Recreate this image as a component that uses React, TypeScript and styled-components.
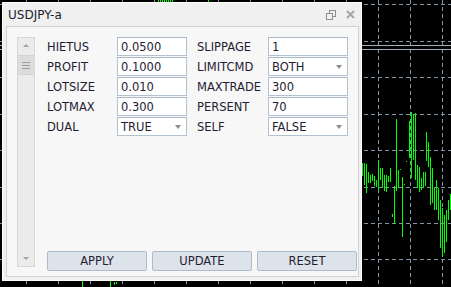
import React from 'react';
import styled, { createGlobalStyle } from 'styled-components';

const GlobalStyle = createGlobalStyle`
  html, body {
    margin: 0;
    padding: 0;
    background: #000;
  }
  body {
    font-family: "DejaVu Sans", Verdana, sans-serif;
  }
`;

const Desktop = styled.div`
  position: relative;
  width: 451px;
  height: 287px;
  overflow: hidden;
  background: #000;
`;

const ChartSvg = styled.svg`
  display: block;
`;

const Window = styled.div`
  position: absolute;
  left: 2px;
  top: 2px;
  width: 360px;
  height: 279px;
  box-sizing: border-box;
  border: 1px solid #ffffff;
  background: #f0f0f0;
  padding: 0 2px 3px 3px;
  display: flex;
  flex-direction: column;
`;

const TitleBar = styled.div`
  height: 23px;
  display: flex;
  align-items: center;
  padding: 0 4px 0 2px;
  gap: 10px;
`;

const Title = styled.div`
  flex: 1;
  font-size: 12px;
  color: #1d1b2e;
  margin-top: 1px;
`;

const TitleIcon = styled.svg`
  display: block;
`;

const Panel = styled.div`
  flex: 1;
  display: flex;
  border: 1px solid #d2d2d2;
  background: #f7f7f7;
`;

const ScrollBar = styled.div`
  width: 18px;
  box-sizing: border-box;
  margin: 10px 0 9px 10px;
  border: 1px solid #d8d8d8;
  background: #ebebeb;
  display: flex;
  flex-direction: column;
  align-items: center;
`;

const Arrow = styled.div<{ $up?: boolean }>`
  width: 0;
  height: 0;
  border-left: 3.5px solid transparent;
  border-right: 3.5px solid transparent;
  ${({ $up }) =>
    $up
      ? 'border-bottom: 3px solid #a2a2a2; margin-top: 6px;'
      : 'border-top: 3px solid #a2a2a2; margin-top: auto; margin-bottom: 6px;'}
`;

const Thumb = styled.div`
  width: 16px;
  height: 20px;
  box-sizing: border-box;
  margin-top: 8px;
  background: #dcdcdc;
  border-top: 1px solid #d2d2d2;
  border-bottom: 1px solid #d2d2d2;
  display: flex;
  flex-direction: column;
  align-items: center;
  justify-content: center;
  gap: 2px;
`;

const Grip = styled.div`
  width: 8px;
  height: 1px;
  background: #9c9c9c;
`;

const Main = styled.div`
  flex: 1;
  display: flex;
  flex-direction: column;
  justify-content: space-between;
  margin-left: 12px;
  padding: 10px 0 5px;
`;

const Fields = styled.div`
  display: flex;
  gap: 10px;
`;

const FieldGroup = styled.div<{ $labelWidth: number; $inputWidth: number }>`
  display: grid;
  grid-template-columns: ${({ $labelWidth, $inputWidth }) => `${$labelWidth}px ${$inputWidth}px`};
  grid-auto-rows: 19px;
  row-gap: 1px;
`;

const Label = styled.div`
  display: flex;
  align-items: center;
  font-size: 11.5px;
  color: #1f1c33;
  white-space: nowrap;
`;

const Box = styled.div`
  box-sizing: border-box;
  height: 19px;
  display: flex;
  align-items: center;
  padding: 0 5px 0 3px;
  border: 1px solid #b3c1d0;
  border-top-color: #a9b8c8;
  background: #ffffff;
  font-size: 11.5px;
  color: #1f1c33;
`;

const BoxText = styled.span`
  flex: 1;
`;

const DropArrow = styled.span`
  width: 0;
  height: 0;
  border-left: 3.5px solid transparent;
  border-right: 3.5px solid transparent;
  border-top: 4px solid #8e8e8e;
`;

const Buttons = styled.div`
  display: flex;
  gap: 5px;
`;

const Button = styled.button`
  width: 100px;
  height: 20px;
  box-sizing: border-box;
  padding: 0;
  border: 1px solid #adbccc;
  border-radius: 2px;
  background: #dde3eb;
  font-family: "DejaVu Sans", Verdana, sans-serif;
  font-size: 11.5px;
  color: #1f1c33;
`;

type Field = { label: string; value: string; select?: boolean };

const left: Field[] = [
  { label: 'HIETUS', value: '0.0500' },
  { label: 'PROFIT', value: '0.1000' },
  { label: 'LOTSIZE', value: '0.010' },
  { label: 'LOTMAX', value: '0.300' },
  { label: 'DUAL', value: 'TRUE', select: true },
];

const right: Field[] = [
  { label: 'SLIPPAGE', value: '1' },
  { label: 'LIMITCMD', value: 'BOTH', select: true },
  { label: 'MAXTRADE', value: '300' },
  { label: 'PERSENT', value: '70' },
  { label: 'SELF', value: 'FALSE', select: true },
];

// x, top, bottom of each green bar on the chart
const bars: [number, number, number][] = [
  [158, 0, 2], [160, 0, 2], [162, 0, 2], [164, 0, 2], [166, 0, 2], [168, 0, 2], [170, 0, 2], [172, 0, 2], [208, 0, 2],
  [82, 281, 287], [110, 281, 287], [114, 282, 285], [116, 282, 284],
  [362, 163, 176], [364, 163, 185], [366, 164, 193], [368, 172, 183], [370, 175, 183], [372, 174, 181],
  [374, 176, 186], [376, 180, 187], [378, 160, 190], [380, 168, 180], [382, 168, 188], [384, 175, 191],
  [386, 175, 192], [388, 176, 182], [390, 168, 182], [392, 214, 217], [394, 186, 224], [396, 119, 191],
  [398, 170, 188], [400, 169, 170], [402, 177, 237], [404, 184, 185], [406, 161, 162], [409, 121, 158],
  [411, 112, 178], [413, 114, 160], [415, 113, 180], [417, 165, 188], [419, 167, 192], [421, 178, 190],
  [423, 172, 188], [425, 172, 186], [426, 132, 161], [428, 142, 167], [430, 157, 205], [432, 168, 203],
  [434, 188, 210], [436, 180, 210], [438, 188, 220], [440, 200, 248], [442, 208, 257], [444, 215, 253],
  [446, 210, 242], [448, 200, 220], [450, 194, 210],
];

const W = 451;
const H = 287;
const gridX = Array.from({ length: 14 }, (_, i) => 26 + i * 32);
const gridY = [4, 41, 77, 114, 150, 187, 223, 259];
const GRID = '#8293a5';

// dashes drawn as 4px pieces every 7px
function dashes(length: number) {
  return Array.from({ length: Math.ceil(length / 7) }, (_, i) => i * 7);
}

function Chart() {
  return (
    <ChartSvg width={W} height={H} viewBox={`0 0 ${W} ${H}`} shapeRendering="crispEdges">
      {gridX.map((x) =>
        dashes(H).map((d) => <rect key={`v${x}-${d}`} x={x} y={d} width={1} height={4} fill={GRID} />)
      )}
      {gridY.map((y) =>
        dashes(W).map((d) => <rect key={`h${y}-${d}`} x={d} y={y} width={4} height={1} fill={GRID} />)
      )}
      <rect x={0} y={45} width={W} height={1} fill="#a4aeb8" />
      <rect x={0} y={49} width={W} height={1} fill="#a4aeb8" />
      {bars.map(([x, y1, y2], i) => (
        <rect key={i} x={x} y={y1} width={1} height={Math.max(1, y2 - y1)} fill="#00ff00" />
      ))}
    </ChartSvg>
  );
}

function FieldColumn({ fields, labelWidth, inputWidth }: { fields: Field[]; labelWidth: number; inputWidth: number }) {
  return (
    <FieldGroup $labelWidth={labelWidth} $inputWidth={inputWidth}>
      {fields.map((f) => (
        <React.Fragment key={f.label}>
          <Label>{f.label}</Label>
          <Box>
            <BoxText>{f.value}</BoxText>
            {f.select && <DropArrow />}
          </Box>
        </React.Fragment>
      ))}
    </FieldGroup>
  );
}

function App() {
  return (
    <Desktop>
      <GlobalStyle />
      <Chart />
      <Window>
        <TitleBar>
          <Title>USDJPY-a</Title>
          <TitleIcon width={10} height={10} viewBox="0 0 10 10">
            <rect x={3.5} y={0.5} width={6} height={6} fill="none" stroke="#8f8f8f" />
            <rect x={0.5} y={3.5} width={6} height={6} fill="#f0f0f0" stroke="#8f8f8f" />
          </TitleIcon>
          <TitleIcon width={9} height={9} viewBox="0 0 9 9">
            <path d="M1 1 L8 8 M8 1 L1 8" stroke="#a6a6a6" strokeWidth={2} />
          </TitleIcon>
        </TitleBar>
        <Panel>
          <ScrollBar>
            <Arrow $up />
            <Thumb>
              <Grip />
              <Grip />
              <Grip />
            </Thumb>
            <Arrow />
          </ScrollBar>
          <Main>
            <Fields>
              <FieldColumn fields={left} labelWidth={70} inputWidth={70} />
              <FieldColumn fields={right} labelWidth={71} inputWidth={80} />
            </Fields>
            <Buttons>
              <Button>APPLY</Button>
              <Button>UPDATE</Button>
              <Button>RESET</Button>
            </Buttons>
          </Main>
        </Panel>
      </Window>
    </Desktop>
  );
}

export default App;
